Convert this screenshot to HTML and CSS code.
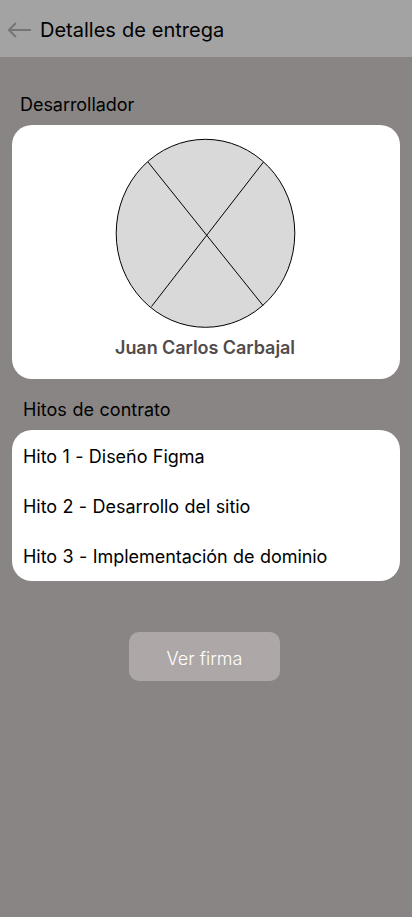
FILE: index.html
```
<!DOCTYPE html>
<html lang="es">
<head>
<meta charset="utf-8">
<title>Detalles de entrega</title>
<link rel="stylesheet" href="styles.css">
</head>
<body>
<header class="topbar">
  <svg class="back" width="24" height="16" viewBox="0 0 24 16" fill="none" stroke="#757575" stroke-width="2"><path d="M23 8H1M7.9 1 .9 8l7 7"/></svg>
  <h1>Detalles de entrega</h1>
</header>
<main>
  <h2 class="label label-dev">Desarrollador</h2>
  <section class="card profile">
    <svg width="180" height="190" viewBox="0 0 180 190" stroke="#000"><ellipse cx="89.5" cy="94.3" rx="89.3" ry="94" fill="#d9d9d9"/><path d="M32 23 147 166.500M147.500 23 35.500 167.500"/></svg>
    <p class="name">Juan Carlos Carbajal</p>
  </section>
  <h2 class="label label-steps">Hitos de contrato</h2>
  <ul class="card steps">
    <li>Hito 1 - Diseño Figma</li>
    <li>Hito 2 - Desarrollo del sitio</li>
    <li>Hito 3 - Implementación de dominio</li>
  </ul>
  <button class="sign">Ver firma</button>
</main>
</body>
</html>
```
FILE: styles.css
```
* { box-sizing: border-box; margin: 0; padding: 0; }
body { min-height: 917px; background: #898584; font-family: Inter, sans-serif; font-size: 18px; line-height: 22px; color: #000; }
.topbar { display: flex; align-items: center; height: 57px; padding: 3px 0 0 8px; gap: 8px; background: #a3a3a3; }
h1 { font-size: 20px; line-height: 24px; font-weight: 400; word-spacing: .4px; }
main { display: flex; flex-direction: column; padding: 37px 12px 0; }
.label { font-size: 18px; font-weight: 400; }
.label-dev { margin: 0 0 9px 8px; letter-spacing: -.05px; }
.label-steps { margin: 20px 0 9px 11px; word-spacing: .6px; }
.card { background: #fff; border-radius: 20px; }
.profile { display: flex; flex-direction: column; align-items: center; height: 254px; padding-top: 14px; }
.profile svg { display: block; overflow: visible; }
.name { margin: 8px 2px 0 0; font-weight: 600; letter-spacing: -.05px; color: #524b4b; }
.steps { display: grid; grid-template-rows: repeat(3, 50px); align-items: center; height: 151px; padding: 2px 11px 0; letter-spacing: -.04px; word-spacing: .4px; list-style: none; }
.sign { align-self: center; width: 151px; height: 49px; margin: 51px 3px 0 0; padding-top: 4px; border: 0; border-radius: 10px; background: #ada8a7; color: #fff; font: 300 18px/22px Inter, sans-serif; }
```
